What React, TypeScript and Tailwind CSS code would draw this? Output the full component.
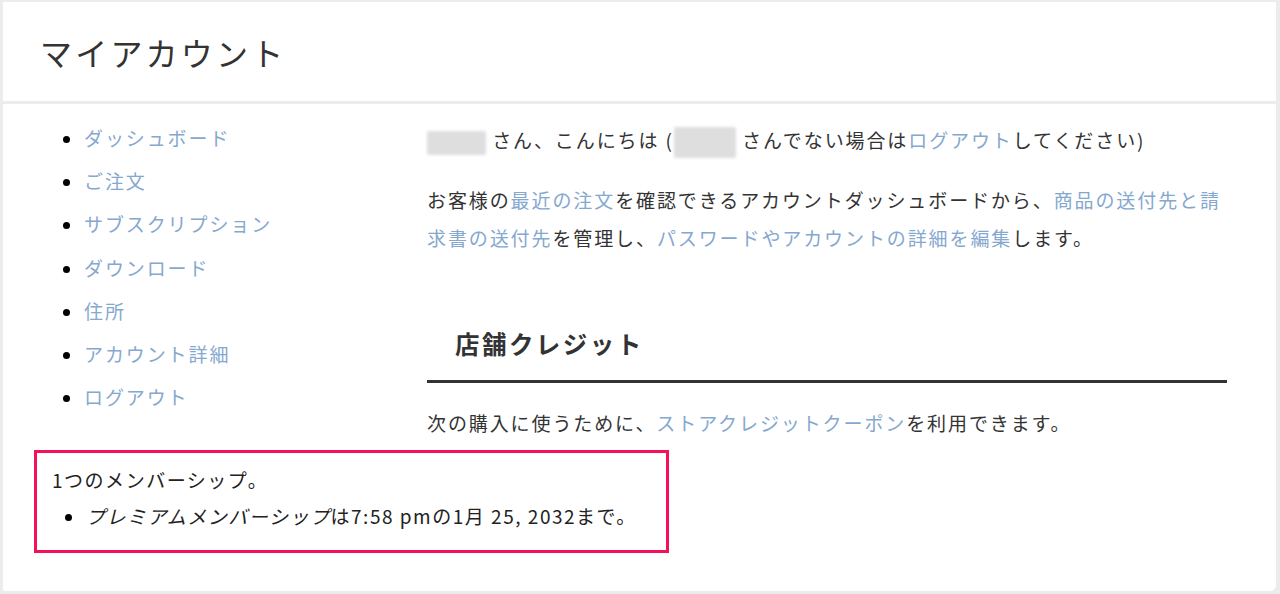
const font = { fontFamily: '"Noto Sans CJK JP", "Noto Sans", sans-serif' };

const navItems = [
  "ダッシュボード",
  "ご注文",
  "サブスクリプション",
  "ダウンロード",
  "住所",
  "アカウント詳細",
  "ログアウト",
];

function Blur({ className }: { className: string }) {
  return (
    <span
      className={`inline-block rounded-[2px] bg-[#dedede] align-middle blur-[1.5px] ${className}`}
    />
  );
}

export default function App() {
  return (
    <div
      style={font}
      className="flex h-[594px] w-[1280px] flex-col gap-[3px] bg-[#ececec] pt-[2px] pr-[4px] pb-[3px] pl-[3px] text-[#333]"
    >
      <header className="flex h-[99px] shrink-0 items-center bg-white pl-[37px]">
        <h1 className="text-[32px] font-normal leading-none tracking-[0.1em] text-[#333]">
          マイアカウント
        </h1>
      </header>

      <main className="flex-1 rounded-br-[6px] rounded-bl-[2px] bg-white">
        <div className="flex">
          <nav className="w-[424px] shrink-0 pt-[12px]">
            <ul className="list-disc pl-[81px] text-[19px] tracking-[0.1em] marker:text-black">
              {navItems.map((item) => (
                <li key={item} className="leading-[43.2px]">
                  <a href="#" className="text-[#85a8cf]">
                    {item}
                  </a>
                </li>
              ))}
            </ul>
          </nav>

          <div className="w-[800px] pt-[17px] text-[19px] leading-[38px] tracking-[0.1em]">
            <p className="mb-[22px]">
              <Blur className="h-[24px] w-[59px]" /> さん、こんにちは (
              <Blur className="h-[31px] w-[62px]" /> さんでない場合は
              <a href="#" className="text-[#85a8cf]">
                ログアウト
              </a>
              してください)
            </p>
            <p>
              お客様の
              <a href="#" className="text-[#85a8cf]">
                最近の注文
              </a>
              を確認できるアカウントダッシュボードから、
              <a href="#" className="text-[#85a8cf]">
                商品の送付先と請求書の送付先
              </a>
              を管理し、
              <a href="#" className="text-[#85a8cf]">
                パスワードやアカウントの詳細を編集
              </a>
              します。
            </p>

            <h2 className="mt-[69px] border-b-[3px] border-[#333] pb-[18px] pl-[28px] text-[24.5px] font-bold leading-[36px] tracking-[0.1em] text-[#333]">
              店舗クレジット
            </h2>
            <p className="mt-[21px]">
              次の購入に使うために、
              <a href="#" className="text-[#85a8cf]">
                ストアクレジットクーポン
              </a>
              を利用できます。
            </p>
          </div>
        </div>

        <div className="mt-[8px] ml-[31px] h-[103px] w-[635px] border-[3px] border-[#f5115a] pt-[9px] pl-[15px] text-[19px] leading-[36px] tracking-[0.08em] text-[#222]">
          <p>1つのメンバーシップ。</p>
          <ul className="list-disc pl-[34px] marker:text-black">
            <li>
              <em>プレミアムメンバーシップ</em>は7:58 pmの1月 25, 2032まで。
            </li>
          </ul>
        </div>
      </main>
    </div>
  );
}
